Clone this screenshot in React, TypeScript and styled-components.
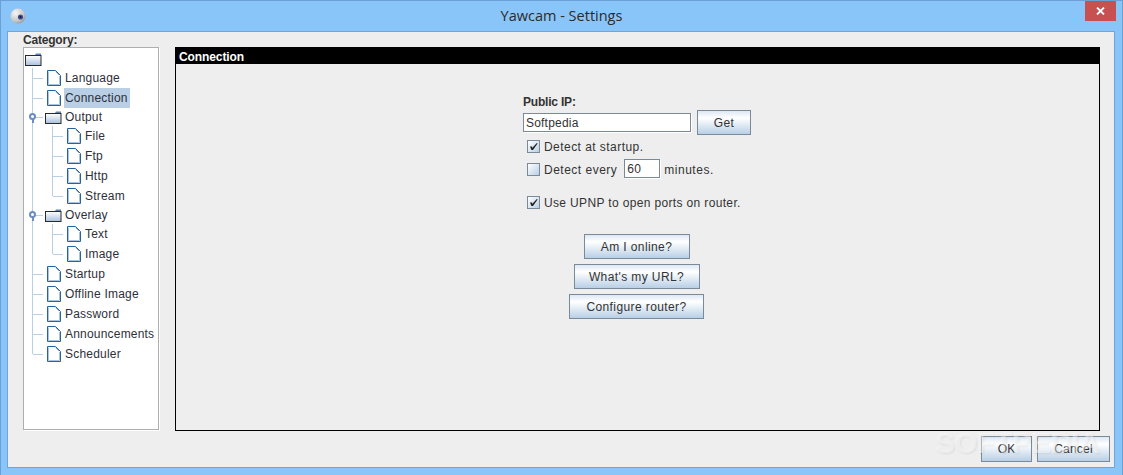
import React from 'react';
import styled, { createGlobalStyle } from 'styled-components';

const GlobalStyle = createGlobalStyle`
    html, body {
        margin: 0;
        padding: 0;
        background: #8ac5f9;
    }
    body {
        font-family: "Liberation Sans", Arial, sans-serif;
        font-size: 12px;
        color: #333;
    }
`;

const LINE = '#b8cfe5';

type Node = { label: string; level: 1 | 2; folder?: boolean; lastChild?: boolean; selected?: boolean; lastRoot?: boolean };

const nodes: Node[] = [
    { label: 'Language', level: 1 },
    { label: 'Connection', level: 1, selected: true },
    { label: 'Output', level: 1, folder: true },
    { label: 'File', level: 2 },
    { label: 'Ftp', level: 2 },
    { label: 'Http', level: 2 },
    { label: 'Stream', level: 2, lastChild: true },
    { label: 'Overlay', level: 1, folder: true },
    { label: 'Text', level: 2 },
    { label: 'Image', level: 2, lastChild: true },
    { label: 'Startup', level: 1 },
    { label: 'Offline Image', level: 1 },
    { label: 'Password', level: 1 },
    { label: 'Announcements', level: 1 },
    { label: 'Scheduler', level: 1, lastRoot: true },
];

const DocIcon = () => (
    <svg width="14" height="16" viewBox="0 0 14 16">
        <path d="M0.5 0.5H8.5L13.5 5.5V15.5H0.5Z" fill="#fff" stroke="#2a6199" />
        <path d="M1.5 1.5V14.5H12.5V6" fill="none" stroke="#a8c4e0" />
        <path d="M9 1.5L12.5 5" stroke="#2a6199" />
    </svg>
);

const FolderIcon = () => (
    <svg width="17" height="13" viewBox="0 0 17 13">
        <defs>
            <linearGradient id="folderFill" x1="0" y1="0" x2="0" y2="1">
                <stop offset="0" stopColor="#ffffff" />
                <stop offset="1" stopColor="#a9c1dd" />
            </linearGradient>
        </defs>
        <path d="M10 2L11 0.5H16V3H10Z" fill="#5b83bb" />
        <rect x="0.5" y="2.5" width="15.5" height="10" fill="url(#folderFill)" stroke="#2a2a2a" />
    </svg>
);

const CamIcon = () => (
    <svg width="16" height="16" viewBox="0 0 16 16">
        <defs>
            <radialGradient id="camBody" cx="0.35" cy="0.3" r="0.8">
                <stop offset="0" stopColor="#f6f6f6" />
                <stop offset="0.7" stopColor="#c4c4c4" />
                <stop offset="1" stopColor="#8a8a8a" />
            </radialGradient>
        </defs>
        <circle cx="8" cy="8" r="7.5" fill="url(#camBody)" />
        <circle cx="10.5" cy="9" r="2.6" fill="#3f4f8f" />
        <circle cx="10.5" cy="9" r="1" fill="#10183c" />
    </svg>
);

const CheckMark = () => (
    <svg width="9" height="9" viewBox="0 0 9 9">
        <path d="M1 4.5H3.2V6L7.8 1L8.6 1.6L4 8H2.4Z" fill="#222" />
    </svg>
);

const Check = ({ on }: { on?: boolean }) => <CheckBox>{on && <CheckMark />}</CheckBox>;

const App = () => {
    return (
        <Window>
            <GlobalStyle />
            <TitleBar>
                <AppIcon><CamIcon /></AppIcon>
                <TitleText>Yawcam - Settings</TitleText>
                <CloseButton>
                    <svg width="9" height="8" viewBox="0 0 9 8">
                        <path d="M1 0.5L8 7.5M8 0.5L1 7.5" stroke="#fff" strokeWidth="1.8" />
                    </svg>
                </CloseButton>
            </TitleBar>
            <Client>
                <Main>
                    <Sidebar>
                        <CategoryLabel>Category:</CategoryLabel>
                        <Tree>
                            <RootRow><FolderIcon /></RootRow>
                            {nodes.map((node) => (
                                <TreeRow key={node.label} $folder={node.folder}>
                                    {node.level === 1 ? (
                                        <Guide $branch $end={node.lastRoot}>{node.folder && <Handle />}</Guide>
                                    ) : (
                                        <>
                                            <Guide $through />
                                            <Guide $branch $end={node.lastChild} />
                                        </>
                                    )}
                                    <IconCell $folder={node.folder}>
                                        {node.folder ? <FolderIcon /> : <DocIcon />}
                                    </IconCell>
                                    <NodeLabel $selected={node.selected} $folder={node.folder}>{node.label}</NodeLabel>
                                </TreeRow>
                            ))}
                        </Tree>
                    </Sidebar>
                    <Panel>
                        <PanelHeader>Connection</PanelHeader>
                        <PanelBody>
                            <Form>
                                <FieldLabel>Public IP:</FieldLabel>
                                <IpRow>
                                    <IpInput readOnly value="Softpedia" />
                                    <GetButton>Get</GetButton>
                                </IpRow>
                                <CheckRow $top={2} $spacing={0.45}>
                                    <Check on />
                                    <span>Detect at startup.</span>
                                </CheckRow>
                                <CheckRow $top={4} $spacing={0.5}>
                                    <Check />
                                    <span>Detect every</span>
                                    <MinutesInput readOnly value="60" />
                                    <span>minutes.</span>
                                </CheckRow>
                                <CheckRow $top={14} $spacing={0.35}>
                                    <Check on />
                                    <span>Use UPNP to open ports on router.</span>
                                </CheckRow>
                                <ActionList>
                                    <ActionButton $width={106}>Am I online?</ActionButton>
                                    <ActionButton $width={126}>What's my URL?</ActionButton>
                                    <ActionButton $width={135}>Configure router?</ActionButton>
                                </ActionList>
                            </Form>
                        </PanelBody>
                    </Panel>
                </Main>
                <Footer>
                    <FooterButton $width={51}>OK</FooterButton>
                    <FooterButton $width={73}>Cancel</FooterButton>
                </Footer>
            </Client>
            <Watermark>SOFTPEDIA</Watermark>
        </Window>
    );
};

const Window = styled.div`
    position: relative;
    box-sizing: border-box;
    width: 1123px;
    height: 475px;
    overflow: hidden;
    display: flex;
    flex-direction: column;
    background: #8ac5f9;
    border: 1px solid #6c9fd4;
    border-bottom: 0;
`;

const TitleBar = styled.div`
    height: 30px;
    flex: none;
    display: flex;
    align-items: flex-start;
    position: relative;
    justify-content: center;
`;

const AppIcon = styled.div`
    position: absolute;
    left: 9px;
    top: 7px;
    height: 16px;
`;

const TitleText = styled.div`
    font-family: "Open Sans", sans-serif;
    font-size: 14.5px;
    line-height: 30px;
    color: #2b2b2b;
`;

const CloseButton = styled.div`
    position: absolute;
    right: 6px;
    top: 0;
    width: 31px;
    height: 20px;
    display: flex;
    align-items: center;
    justify-content: center;
    background: #c75050;
`;

const Client = styled.div`
    flex: none;
    box-sizing: border-box;
    width: 1108px;
    height: 437px;
    margin-left: 6px;
    display: flex;
    flex-direction: column;
    background: #eeeeee;
    border: 1px solid #6fa5d9;
`;

const Main = styled.div`
    display: flex;
    gap: 16px;
    padding-left: 15px;
`;

const Sidebar = styled.div`
    width: 136px;
    flex: none;
`;

const CategoryLabel = styled.div`
    height: 15px;
    line-height: 16px;
    font-weight: bold;
    font-size: 12px;
    letter-spacing: -0.2px;
    color: #333;
`;

const Tree = styled.div`
    box-sizing: border-box;
    height: 383px;
    padding-top: 2px;
    background: #fff;
    border: 1px solid #aeaeae;
    box-shadow: 1px 1px 0 #fff;
`;

const RootRow = styled.div`
    height: 18px;
    padding-left: 1px;
    display: flex;
    align-items: center;
`;

const TreeRow = styled.div<{ $folder?: boolean }>`
    height: ${(p) => (p.$folder ? 18 : 20)}px;
    display: flex;
`;

const Guide = styled.div<{ $through?: boolean; $branch?: boolean; $end?: boolean }>`
    position: relative;
    width: 20px;
    flex: none;
    background-repeat: no-repeat;
    background-image:
        linear-gradient(${LINE}, ${LINE})${(p) => (p.$branch ? `, linear-gradient(${LINE}, ${LINE})` : '')};
    background-size: 1px ${(p) => (p.$end ? '50%' : '100%')}${(p) => (p.$branch ? ', 10px 1px' : '')};
    background-position: 8px 0${(p) => (p.$branch ? ', 9px 50%' : '')};
`;

const Handle = styled.div`
    position: absolute;
    left: 5px;
    top: 5px;
    box-sizing: border-box;
    width: 7px;
    height: 7px;
    border-radius: 50%;
    border: 2px solid #6b8cc4;
    background: #fff;

    &::after {
        content: '';
        position: absolute;
        left: 0.5px;
        top: 4px;
        width: 2px;
        height: 4px;
        background: #6b8cc4;
    }
`;

const IconCell = styled.div<{ $folder?: boolean }>`
    width: 20px;
    flex: none;
    display: flex;
    align-items: center;
    padding-left: ${(p) => (p.$folder ? 1 : 3)}px;
    box-sizing: border-box;
`;

const NodeLabel = styled.div<{ $selected?: boolean; $folder?: boolean }>`
    padding: 0 2px 0 1px;
    line-height: ${(p) => (p.$folder ? 18 : 20)}px;
    height: ${(p) => (p.$folder ? 18 : 20)}px;
    letter-spacing: 0.2px;
    color: #2f2f3a;
    white-space: nowrap;
    background: ${(p) => (p.$selected ? '#b8cfe5' : 'transparent')};
`;

const Panel = styled.div`
    box-sizing: border-box;
    width: 925px;
    height: 384px;
    margin-top: 15px;
    border: 1px solid #000;
    display: flex;
    flex-direction: column;
`;

const PanelHeader = styled.div`
    height: 16px;
    line-height: 19px;
    flex: none;
    padding-left: 3px;
    background: #000;
    color: #fff;
    font-weight: bold;
    font-size: 12px;
    letter-spacing: -0.1px;
`;

const PanelBody = styled.div`
    flex: 1;
    display: flex;
    justify-content: center;
    padding-top: 31px;
`;

const Form = styled.div`
    width: 228px;
    margin-left: -1px;
`;

const FieldLabel = styled.div`
    height: 15px;
    line-height: 15px;
    font-weight: bold;
    letter-spacing: -0.2px;
`;

const IpRow = styled.div`
    display: flex;
    align-items: center;
    gap: 6px;
    height: 25px;
`;

const textField = `
    box-sizing: border-box;
    padding: 0 2px;
    background: #fff;
    border: 1px solid #7a8a99;
    box-shadow: 1px 1px 0 #fff;
    outline: none;
    font-family: "Liberation Sans", Arial, sans-serif;
    font-size: 12px;
    letter-spacing: 0.2px;
    color: #333;
`;

const IpInput = styled.input`
    ${textField}
    width: 168px;
    height: 19px;
`;

const MinutesInput = styled.input`
    ${textField}
    width: 36px;
    height: 19px;
    align-self: flex-start;
    margin: -1px 0 0 3px;
`;

const GetButton = styled.button`
    box-sizing: border-box;
    width: 54px;
    height: 25px;
    padding: 0;
    font: inherit;
    letter-spacing: 0.4px;
    color: #333;
    border: 1px solid #7a8a99;
    background: linear-gradient(#dde8f3 0%, #fff 30%, #b8cfe5 100%);
`;

const CheckRow = styled.div<{ $top: number; $spacing: number }>`
    display: flex;
    align-items: center;
    gap: 4px;
    height: 19px;
    margin-top: ${(p) => p.$top}px;
    padding-left: 4px;
    letter-spacing: ${(p) => p.$spacing}px;
    white-space: nowrap;
`;

const CheckBox = styled.div`
    box-sizing: border-box;
    width: 13px;
    height: 13px;
    flex: none;
    display: flex;
    align-items: center;
    justify-content: center;
    border: 1px solid #7a8a99;
    background: linear-gradient(135deg, #fff 0%, #b8cfe5 100%);
`;

const ActionList = styled.div`
    display: flex;
    flex-direction: column;
    align-items: center;
    gap: 5px;
    margin-top: 22px;
    padding-right: 1px;
`;

const ActionButton = styled(GetButton)<{ $width: number }>`
    width: ${(p) => p.$width}px;
`;

const Footer = styled.div`
    display: flex;
    justify-content: flex-end;
    gap: 5px;
    padding: 5px 4px 0 0;
`;

const FooterButton = styled(GetButton)<{ $width: number }>`
    width: ${(p) => p.$width}px;
    height: 26px;
    letter-spacing: 0.2px;
`;

const Watermark = styled.div`
    position: absolute;
    left: 934px;
    top: 425px;
    font-size: 30px;
    font-weight: bold;
    letter-spacing: -0.8px;
    color: rgba(255, 255, 255, 0.45);
    text-shadow: 1px 1px 2px rgba(0, 0, 0, 0.07);
    pointer-events: none;
`;

export default App;
